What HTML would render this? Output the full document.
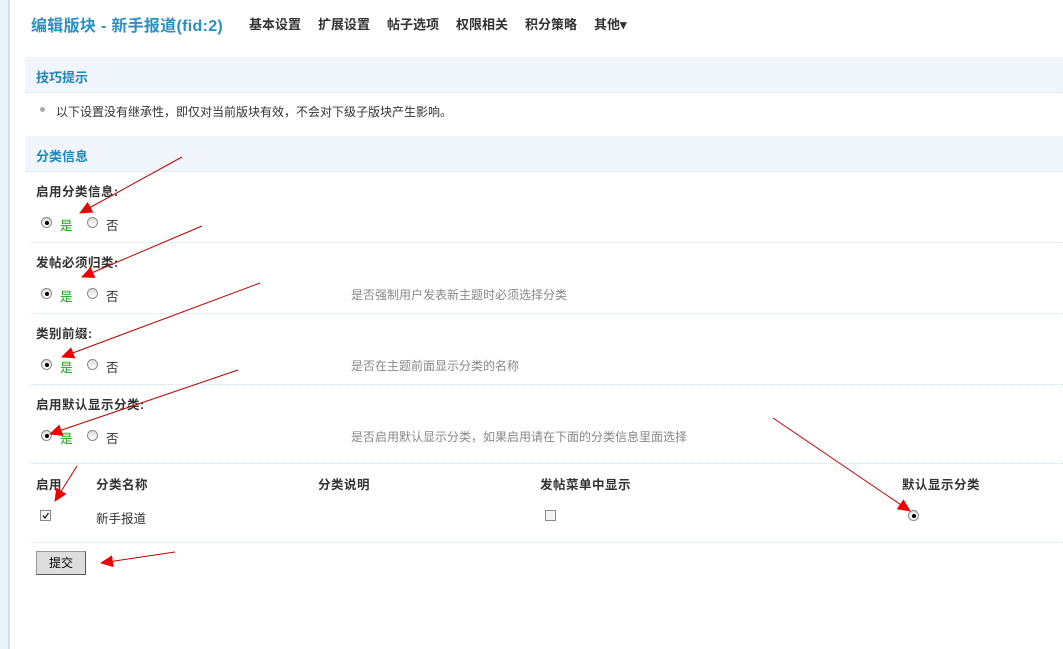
<!DOCTYPE html>
<html><head><meta charset="utf-8"><style>
*{margin:0;padding:0;box-sizing:border-box}
body{width:1063px;height:649px;overflow:hidden;background:#fff;font-family:"Liberation Sans","Noto Sans CJK SC",sans-serif;font-size:12px;color:#333;position:relative}
.strip{position:absolute;left:0;top:0;width:10px;height:649px;background:#e9f1f9;border-right:2px solid #cfe0ef}
.abs{position:absolute;white-space:nowrap}
.title{left:31px;top:12px;font-size:16px;font-weight:bold;color:#2b8fc4;letter-spacing:0.3px}
.tab{top:14px;font-size:13px;font-weight:bold;color:#333}
.band{position:absolute;left:25px;width:1038px;height:36px;background:#f0f6fb;border-bottom:1px dotted #d8e4ee}
.band span{position:absolute;left:11px;top:10px;font-weight:bold;color:#1d87b8;font-size:13px}
.sep{position:absolute;left:30px;width:1033px;border-top:1px dotted #d4e2ec}
.lbl{font-weight:bold;color:#333;font-size:12.5px;letter-spacing:0.5px}
.radio{position:absolute;width:11px;height:11px;border-radius:50%;border:1px solid #8a8a8a;background:linear-gradient(#ddd,#fff)}
.radio.on::after{content:"";position:absolute;left:2.5px;top:2.5px;width:4px;height:4px;border-radius:50%;background:#000}
.yes{color:#19a319;font-size:12.5px}
.no{font-size:12.5px;color:#333}
.hint{color:#888;font-size:12px}
.cb{position:absolute;width:11px;height:11px;border:1px solid #8a8a8a;background:#f4f4f4}
.btn{position:absolute;left:36px;top:551px;width:50px;height:24px;background:#ddd;border:1px solid #999;border-right-color:#555;border-bottom-color:#555;text-align:center;line-height:22px;font-size:12px;color:#000}
</style></head><body>
<div class="strip"></div>
<div class="abs title">编辑版块 - 新手报道(fid:2)</div>
<div class="abs tab" style="left:249px">基本设置</div>
<div class="abs tab" style="left:318px">扩展设置</div>
<div class="abs tab" style="left:387px">帖子选项</div>
<div class="abs tab" style="left:456px">权限相关</div>
<div class="abs tab" style="left:525px">积分策略</div>
<div class="abs tab" style="left:594px">其他▾</div>

<div class="band" style="top:57px"><span>技巧提示</span></div>
<div class="abs" style="left:40px;top:107px;width:5px;height:5px;border-radius:50%;background:#aaa"></div>
<div class="abs" style="left:56px;top:103px;color:#333">以下设置没有继承性，即仅对当前版块有效，不会对下级子版块产生影响。</div>
<div class="band" style="top:136px"><span>分类信息</span></div>

<div class="abs lbl" style="left:36px;top:181px">启用分类信息:</div>
<div class="radio on" style="left:41px;top:217px"></div><div class="abs yes" style="left:60px;top:215px">是</div>
<div class="radio" style="left:87px;top:217px"></div><div class="abs no" style="left:106px;top:215px">否</div>
<div class="sep" style="top:242px"></div>

<div class="abs lbl" style="left:36px;top:252px">发帖必须归类:</div>
<div class="radio on" style="left:41px;top:288px"></div><div class="abs yes" style="left:60px;top:286px">是</div>
<div class="radio" style="left:87px;top:288px"></div><div class="abs no" style="left:106px;top:286px">否</div>
<div class="abs hint" style="left:351px;top:286px">是否强制用户发表新主题时必须选择分类</div>
<div class="sep" style="top:313px"></div>

<div class="abs lbl" style="left:36px;top:323px">类别前缀:</div>
<div class="radio on" style="left:41px;top:359px"></div><div class="abs yes" style="left:60px;top:357px">是</div>
<div class="radio" style="left:87px;top:359px"></div><div class="abs no" style="left:106px;top:357px">否</div>
<div class="abs hint" style="left:351px;top:357px">是否在主题前面显示分类的名称</div>
<div class="sep" style="top:384px"></div>

<div class="abs lbl" style="left:36px;top:394px">启用默认显示分类:</div>
<div class="radio on" style="left:41px;top:430px"></div><div class="abs yes" style="left:60px;top:428px">是</div>
<div class="radio" style="left:87px;top:430px"></div><div class="abs no" style="left:106px;top:428px">否</div>
<div class="abs hint" style="left:351px;top:428px">是否启用默认显示分类，如果启用请在下面的分类信息里面选择</div>
<div class="sep" style="top:463px"></div>

<div class="abs lbl" style="left:36px;top:474px">启用</div>
<div class="abs lbl" style="left:96px;top:474px">分类名称</div>
<div class="abs lbl" style="left:318px;top:474px">分类说明</div>
<div class="abs lbl" style="left:540px;top:474px">发帖菜单中显示</div>
<div class="abs lbl" style="left:902px;top:474px">默认显示分类</div>
<div class="cb" style="left:40px;top:510px"><svg width="9" height="9" style="position:absolute;left:0;top:0"><path d="M2 4.5 L4 7 L7.5 2" stroke="#222" stroke-width="1.3" fill="none"/></svg></div>
<div class="abs" style="left:96px;top:508px;font-size:12.5px">新手报道</div>
<div class="cb" style="left:545px;top:510px"></div>
<div class="radio on" style="left:908px;top:510px"></div>
<div class="sep" style="top:542px"></div>
<div class="btn">提交</div>

<svg width="1063" height="649" style="position:absolute;left:0;top:0">
<defs><marker id="a" markerWidth="14" markerHeight="12" refX="12" refY="6" orient="auto" markerUnits="userSpaceOnUse"><path d="M0 0 L13 6 L0 12Z" fill="#e00"/></marker></defs>
<g stroke="#b00" stroke-width="1" fill="none" marker-end="url(#a)">
<line x1="182" y1="157" x2="80" y2="213"/>
<line x1="202" y1="226" x2="82" y2="277"/>
<line x1="260" y1="283" x2="62" y2="357"/>
<line x1="238" y1="370" x2="50" y2="434"/>
<line x1="77" y1="466" x2="55" y2="501"/>
<line x1="773" y1="418" x2="910" y2="511"/>
<line x1="175" y1="552" x2="101" y2="563"/>
</g></svg>
</body></html>
